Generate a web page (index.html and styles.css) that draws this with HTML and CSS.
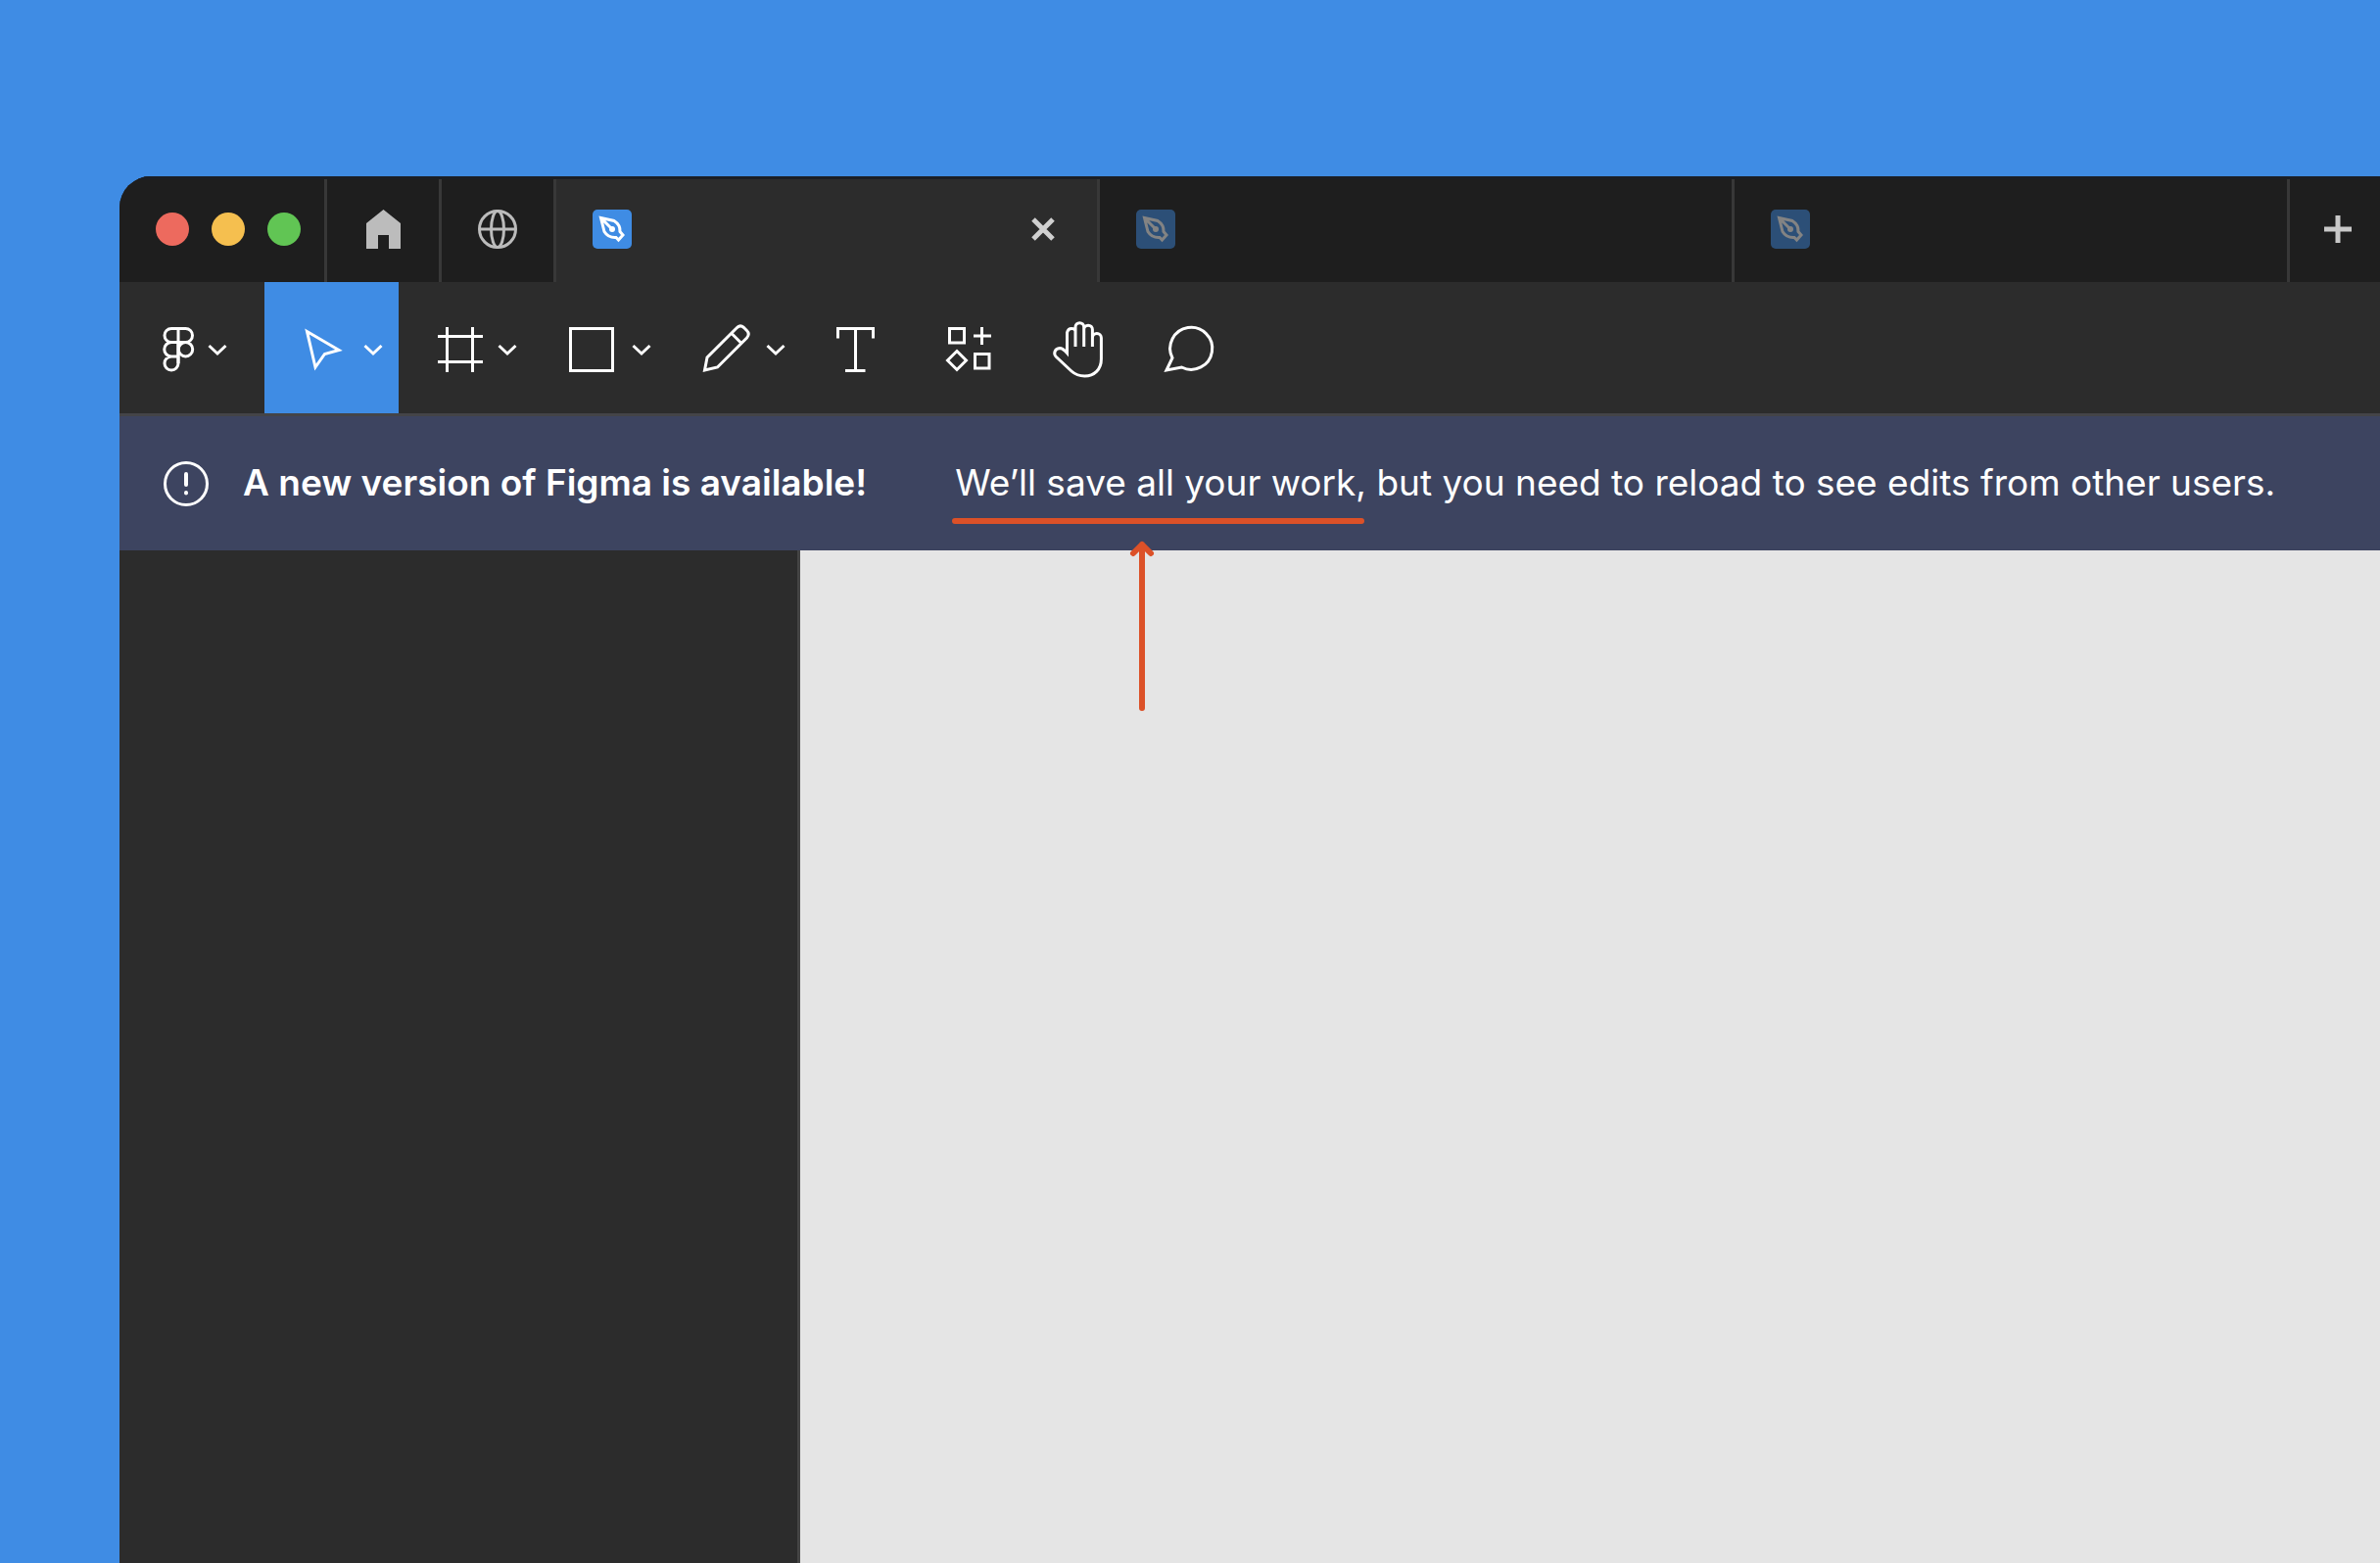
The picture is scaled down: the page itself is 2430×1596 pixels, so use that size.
FILE: index.html
```html
<!DOCTYPE html>
<html lang="en">
<head>
<meta charset="utf-8">
<meta name="viewport" content="width=device-width, initial-scale=1">
<title>Figma</title>
<link rel="stylesheet" href="styles.css">
</head>
<body>
<svg class="defs" aria-hidden="true">
  <symbol id="chevron" viewBox="0 0 20 20"><path d="M1.500 8 10 16 18.500 8"/></symbol>
  <symbol id="pen-file" viewBox="0 0 40 40">
    <rect class="file-tile" width="40" height="40" rx="5"/>
    <path class="file-nib" d="M8.500 8.500 22 11.500Q28.500 15.500 28 22.500L31 26 26.500 31 24 28.500Q16 29 12 22.500ZM9 9 19 19"/>
    <circle class="file-dot" cx="20" cy="20" r="3"/>
  </symbol>
</svg>
<div class="window">
  <header class="titlebar">
    <div class="lights">
      <button class="light light-close" aria-label="Close window"></button>
      <button class="light light-min" aria-label="Minimize window"></button>
      <button class="light light-max" aria-label="Zoom window"></button>
    </div>
    <button class="nav-cell" aria-label="Home">
      <svg class="home-icon" viewBox="0 0 35 40"><path d="M17.500 0 35 14V40H23V26H12V40H0V14Z"/></svg>
    </button>
    <button class="nav-cell" aria-label="Community">
      <svg class="globe-icon" viewBox="0 0 40 40"><circle cx="20" cy="20" r="18.500"/><ellipse cx="20" cy="20" rx="6.500" ry="18.500"/><path d="M1.500 20H38.500"/></svg>
    </button>
    <div class="tab tab-active">
      <svg class="file-icon" role="img" aria-label="Design file"><use href="#pen-file"/></svg>
      <button class="tab-close" aria-label="Close tab"><svg viewBox="0 0 24 24"><path d="M2 2 22 22M22 2 2 22"/></svg></button>
    </div>
    <div class="tab"><svg class="file-icon" role="img" aria-label="Design file"><use href="#pen-file"/></svg></div>
    <div class="tab"><svg class="file-icon" role="img" aria-label="Design file"><use href="#pen-file"/></svg></div>
    <button class="new-tab" aria-label="New tab"><svg viewBox="0 0 28 28"><path d="M14 0V28M0 14H28"/></svg></button>
  </header>

  <nav class="toolbar" aria-label="Tools">
    <button class="tool tool-main" aria-label="Main menu">
      <svg class="logo-icon" viewBox="0 0 48 64"><path d="M24 12.500H17a7 7 0 0 0 0 14H31.500a7 7 0 0 0 0-14ZM24 26.500H17a7.200 7.200 0 0 0 0 14.500H24ZM24 41H17a7 7 0 1 0 7 7Z"/><circle cx="31.500" cy="33.700" r="7.200"/><path d="M24 12V48"/></svg>
      <svg class="chevron"><use href="#chevron"/></svg>
    </button>
    <button class="tool tool-menu tool-active" aria-label="Move">
      <svg class="tool-icon" viewBox="0 0 64 64"><path d="M14.500 15.500 47 34.500 32.500 38.500 23 52Z"/></svg>
      <svg class="chevron"><use href="#chevron"/></svg>
    </button>
    <button class="tool tool-menu" aria-label="Frame">
      <svg class="tool-icon" viewBox="0 0 64 64"><path d="M20.500 11V57M46.500 11V57M11 20.500H57M11 46.500H57"/></svg>
      <svg class="chevron"><use href="#chevron"/></svg>
    </button>
    <button class="tool tool-menu" aria-label="Rectangle">
      <svg class="tool-icon" viewBox="0 0 64 64"><rect x="9.500" y="12.500" width="43" height="43"/></svg>
      <svg class="chevron"><use href="#chevron"/></svg>
    </button>
    <button class="tool tool-menu" aria-label="Pencil">
      <svg class="tool-icon" viewBox="0 0 64 64"><path d="M9.500 55 12 42 42 12Q45.500 8 49.500 11.500L52.500 14.500Q56 18 52.500 22L22.500 52ZM37 17.500 46.500 27"/></svg>
      <svg class="chevron"><use href="#chevron"/></svg>
    </button>
    <button class="tool tool-plain" aria-label="Text">
      <svg class="tool-icon" viewBox="0 0 64 64"><path d="M13.500 22.500V12.500H49.500V22.500M31.500 12.500V55.500M21 55.500H41.500"/></svg>
    </button>
    <button class="tool tool-plain" aria-label="Resources">
      <svg class="tool-icon" viewBox="0 0 64 64"><path d="M14.500 12.500H29.500V27H14.500ZM40.500 38.500H55V53H40.500ZM47.500 11V29M39 20H57M22 35.500 31.500 45 22 54.500 12.500 45Z"/></svg>
    </button>
    <button class="tool tool-plain" aria-label="Hand">
      <svg class="tool-icon" viewBox="0 0 64 64"><path d="M30 31V11a4.300 4.300 0 0 1 8.700 0V31M38.700 31V13.500a4.300 4.300 0 0 1 8.700 0V31M47.400 22a4.500 4.500 0 0 1 9 0V43.500C56.500 54.500 49 61 39.500 61Q31.500 61 26 56L10.500 41.500C7 38 9 33 14 32.500Q17 32.500 21.500 37.500V16.500Q22.500 12.500 26 12.500T30 15"/></svg>
    </button>
    <button class="tool tool-plain" aria-label="Comment">
      <svg class="tool-icon" viewBox="0 0 64 64"><path d="M10 55 16 42.500A21.500 21.500 0 1 1 25.500 52Z"/></svg>
    </button>
  </nav>

  <section class="banner" role="status">
    <svg class="alert-icon" viewBox="0 0 46 46"><circle cx="23" cy="23" r="21.500"/><path class="alert-mark" d="M23 13V24M23 32V32.500"/></svg>
    <strong class="banner-title">A new version of Figma is available!</strong>
    <p class="banner-text"><span class="marked">We’ll save all your work,<svg class="arrow" viewBox="0 0 24 174"><path d="M12 171V4M3 13 12 4 21 13"/></svg></span> but you need to reload to see edits from other users.</p>
  </section>

  <div class="workspace">
    <aside class="sidebar"></aside>
    <main class="canvas"></main>
  </div>
</div>
</body>
</html>
```
FILE: styles.css
```css
* { box-sizing: border-box; }

body {
  margin: 0;
  min-height: 100vh;
  display: flex;
  padding: 180px 0 0 122px;
  background: #3f8ce4;
  font-family: Inter, "Liberation Sans", sans-serif;
  color: #fff;
}

button {
  margin: 0;
  padding: 0;
  border: 0;
  background: none;
  color: inherit;
  font: inherit;
}

svg {
  display: block;
  flex: none;
  fill: none;
  stroke: currentColor;
  stroke-width: 3;
}

.defs { position: absolute; width: 0; height: 0; }

.window {
  flex: 1;
  min-width: 0;
  display: flex;
  flex-direction: column;
  overflow: hidden;
  border-top-left-radius: 32px;
  background: #2c2c2c;
}

/* Title bar and tabs */
.titlebar {
  display: grid;
  grid-template-columns: 212px 117px 117px 555fr 648fr 567fr 92px;
  height: 108px;
  border-top: 3px solid #1a1e25;
  background: #1e1e1e;
  color: #bcbcbc;
}

.lights, .nav-cell, .tab {
  display: flex;
  align-items: center;
  padding-bottom: 3px;
  border-right: 3px solid #383838;
}

.lights { gap: 23px; padding-left: 37px; }
.light { width: 34px; height: 34px; border-radius: 50%; }
.light-close { background: #ed6a5e; }
.light-min { background: #f5bf4f; }
.light-max { background: #61c554; }

.nav-cell { justify-content: center; }
.home-icon { width: 35px; height: 40px; fill: currentColor; stroke: none; }
.globe-icon { width: 40px; height: 40px; }

.tab { min-width: 0; justify-content: space-between; padding-left: 37px; padding-right: 43px; }
.tab-active { background: #2c2c2c; }

.file-icon { width: 40px; height: 40px; opacity: 0.45; }
.tab-active .file-icon { opacity: 1; }
.file-tile { fill: #3f8ce4; stroke: none; }
.file-nib { stroke: #fff; stroke-width: 3; }
.file-dot { fill: #fff; stroke: none; }

.tab-close svg { width: 24px; height: 24px; stroke: #d0d0d0; stroke-width: 5; }

.new-tab {
  display: flex;
  align-items: center;
  justify-content: center;
  padding: 0 0 3px 5px;
}
.new-tab svg { width: 28px; height: 28px; stroke: #c8c8c8; stroke-width: 5; }

/* Toolbar */
.toolbar {
  display: flex;
  height: 137px;
  border-bottom: 3px solid #444448;
}

.tool { flex: none; display: flex; align-items: center; }
.tool-main { width: 148px; gap: 6px; padding-left: 36px; }
.tool-menu { width: 137px; gap: 8px; padding-left: 29px; }
.tool-plain { width: 113px; padding-left: 24px; }
.tool-active { background: #3f8ce4; }
.tool-icon { width: 64px; height: 64px; }
.logo-icon { width: 48px; height: 64px; }
.chevron { width: 20px; height: 20px; }

/* Update notice */
.banner {
  display: flex;
  align-items: center;
  height: 137px;
  padding-left: 45px;
  background: #3d4460;
  font-size: 37px;
  line-height: 48px;
  white-space: nowrap;
}

.alert-icon { width: 46px; height: 46px; }
.alert-mark { stroke-width: 4; stroke-linecap: round; }
.banner-title { margin-left: 35px; padding-bottom: 2px; font-weight: 600; }
.banner-text { margin: 0 0 0 90px; padding-bottom: 2px; }

.marked { position: relative; }
.marked::after {
  content: "";
  position: absolute;
  left: -3px;
  right: 2px;
  bottom: -20px;
  height: 6px;
  border-radius: 3px;
  background: #dc5128;
}

.arrow {
  position: absolute;
  left: 179px;
  top: 82px;
  width: 24px;
  height: 174px;
  overflow: visible;
  stroke: #dc5128;
  stroke-width: 6;
  stroke-linecap: round;
  stroke-linejoin: round;
}

/* Workspace */
.workspace { flex: 1; display: flex; }
.sidebar { flex: none; width: 695px; border-right: 3px solid #444; background: #2c2c2c; }
.canvas { flex: 1; background: #e5e5e5; }
```
